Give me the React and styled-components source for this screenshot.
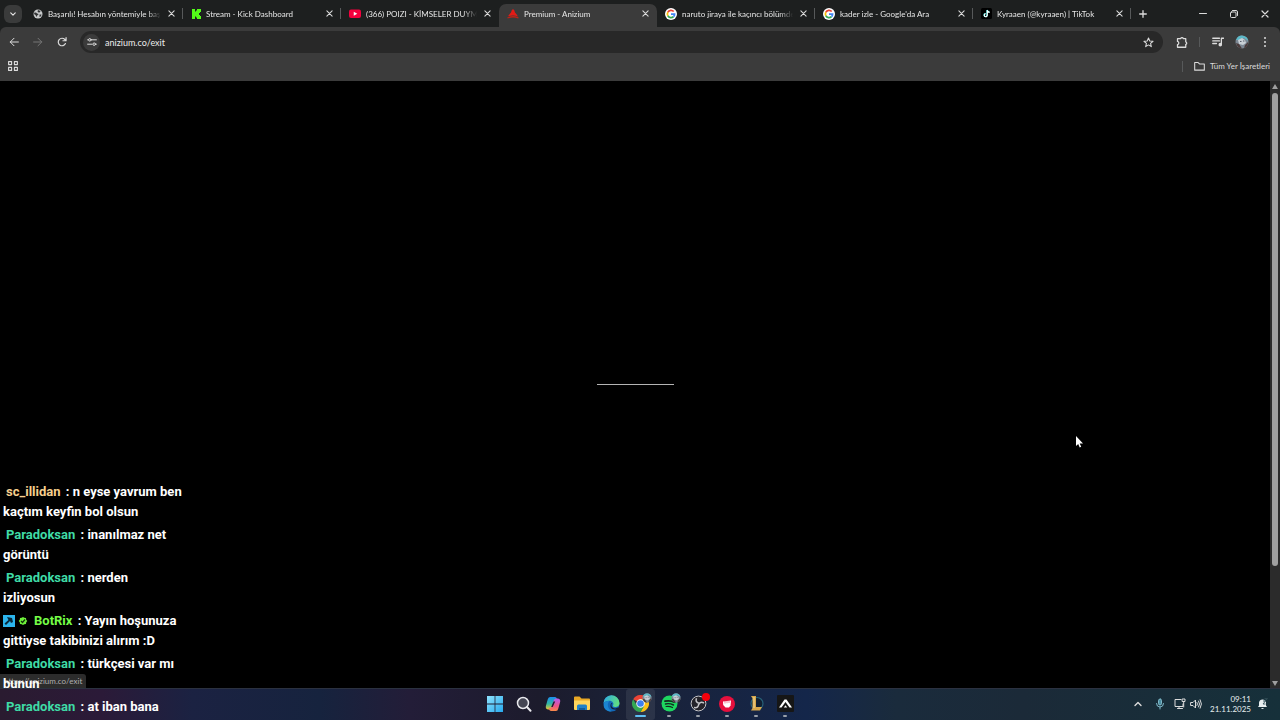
import React from 'react'
import styled, { createGlobalStyle } from 'styled-components'

const GlobalStyle = createGlobalStyle`
  * {
    box-sizing: border-box;
  }
  body {
    margin: 0;
    background: #000;
    font-family: Lato, 'Open Sans', sans-serif;
    overflow: hidden;
  }
  button, input {
    font-family: inherit;
    border: 0;
    padding: 0;
    background: none;
    color: inherit;
    outline: none;
  }
  svg {
    display: block;
    flex: none;
  }
`

const Desktop = styled.div`
  position: relative;
  display: flex;
  flex-direction: column;
  height: 100vh;
`

const TabStrip = styled.header`
  display: flex;
  align-items: stretch;
  height: 27px;
  background: #1d1f1f;
  color: #e6e6e6;
`

const TabSearch = styled.button`
  display: flex;
  align-items: center;
  justify-content: center;
  align-self: center;
  width: 18px;
  height: 18px;
  margin: 0 3px 0 4px;
  border-radius: 6px;
  background: #3a3b3b;
`

const TabItem = styled.div`
  flex: 0 1 158px;
  min-width: 0;
  display: flex;
  align-items: center;
  gap: 5px;
  margin-top: ${(p) => (p.$active ? '4px' : '0')};
  padding: ${(p) => (p.$active ? '0 7px 4px 8px' : '0 7px 0 8px')};
  border-radius: 7px 7px 0 0;
  background: ${(p) => (p.$active ? '#3b3b3b' : 'transparent')};
`

const TabLabel = styled.button`
  flex: 1;
  min-width: 0;
  height: 18px;
  line-height: 18px;
  text-align: left;
  font-size: 8px;
  white-space: nowrap;
  overflow: hidden;
  mask-image: linear-gradient(to right, #000 88%, transparent);
`

const Divider = styled.span`
  flex: none;
  align-self: center;
  width: 1px;
  height: ${(p) => p.$height || 11}px;
  margin: ${(p) => p.$margin || '0'};
  background: ${(p) => (p.$hidden ? 'transparent' : '#57595a')};
`

const IconButton = styled.button`
  flex: none;
  align-self: center;
  display: flex;
  align-items: center;
  justify-content: center;
  width: ${(p) => p.$width || 12}px;
  height: 18px;
  color: ${(p) => p.$color || '#dcdcdc'};
`

const WindowControls = styled.div`
  display: flex;
  align-items: center;
  margin-left: auto;
`

const ToolbarBack = styled.div`
  background: #1d1f1f;
`

const Toolbar = styled.nav`
  display: flex;
  align-items: center;
  height: 30px;
  padding: 0 4px 0 2px;
  background: #3b3b3b;
  border-radius: 6px 6px 0 0;
`

const Omnibox = styled.form`
  flex: 1;
  display: flex;
  align-items: center;
  gap: 5px;
  height: 22px;
  margin: 0 8px 0 6px;
  padding: 0 9px 0 3px;
  border-radius: 11px;
  background: #282828;
`

const SiteInfo = styled.button`
  display: flex;
  align-items: center;
  justify-content: center;
  width: 17px;
  height: 17px;
  border-radius: 50%;
  background: #3b3b3b;
  color: #dcdcdc;
`

const Address = styled.input`
  flex: 1;
  min-width: 0;
  height: 20px;
  font-size: 9px;
  color: #ececec;
`

const Bookmarks = styled.div`
  display: flex;
  align-items: center;
  height: 24px;
  padding: 0 10px 6px 7px;
  background: #3b3b3b;
  color: #dcdcdc;
`

const FolderButton = styled.button`
  display: flex;
  align-items: center;
  gap: 5px;
  font-size: 8px;
  white-space: nowrap;
`

const Page = styled.main`
  position: relative;
  flex: 1;
  min-height: 0;
  display: flex;
  background: #000;
`

const Content = styled.div`
  flex: 1;
  display: flex;
  align-items: center;
  justify-content: center;
`

const Loader = styled.div`
  width: 77px;
  height: 1px;
  background: #b4b4b4;
`

const Scrollbar = styled.div`
  display: flex;
  flex-direction: column;
  align-items: center;
  width: 10px;
  padding: 3px 0 2px;
  background: #2b2b2b;
`

const Arrow = styled.span`
  border: 3px solid transparent;
  border-top-width: ${(p) => (p.$down ? '5px' : '0')};
  border-bottom-width: ${(p) => (p.$down ? '0' : '5px')};
  border-${(p) => (p.$down ? 'top' : 'bottom')}-color: #9f9f9f;
`

const Track = styled.div`
  flex: 1;
  width: 6px;
  margin: 4px 0;
`

const Thumb = styled.div`
  height: 81%;
  border-radius: 3px;
  background: #9f9f9f;
`

const StatusBubble = styled.div`
  position: absolute;
  left: 0;
  bottom: 0;
  height: 14px;
  padding: 0 4px;
  border-radius: 0 3px 0 0;
  background: #2c2c2c;
  color: #b0b0b0;
  font-size: 8px;
  line-height: 14px;
`

const Pointer = styled.svg`
  position: absolute;
  left: 84%;
  top: 354px;
`

const Chat = styled.ul`
  position: absolute;
  left: 3px;
  bottom: 3px;
  display: flex;
  flex-direction: column;
  gap: 3px;
  margin: 0;
  padding: 0;
  list-style: none;
  font-family: Roboto, sans-serif;
  font-size: 13px;
  font-weight: 700;
  line-height: 20px;
  color: #fff;
`

const Message = styled.li`
  white-space: pre-line;
`

const Nick = styled.span`
  margin: 0 2px 0 3px;
  color: ${(p) => p.$color};
`

const Badge = styled.span`
  display: inline-block;
  height: 12px;
  margin-right: 3px;
  vertical-align: -2px;
  line-height: 12px;
`

const Taskbar = styled.footer`
  display: grid;
  grid-template-columns: 1fr auto 1fr;
  align-items: stretch;
  height: 32px;
  border-top: 1px solid #2b3140;
  background: linear-gradient(
    to right,
    #2a1b30 0%,
    #2b1a38 8%,
    #1b2242 15%,
    #16233e 25%,
    #231d38 32%,
    #1c1b2c 42%,
    #1a2238 50%,
    #14264a 63%,
    #1a2b3c 70%,
    #1b2a38 80%,
    #16303a 100%
  );
`

const Apps = styled.div`
  grid-column: 2;
  display: flex;
`

const AppButton = styled.button`
  position: relative;
  display: flex;
  align-items: center;
  justify-content: center;
  width: 29px;
  padding-bottom: 2px;
  border-radius: 3px;
  background: ${(p) => (p.$active ? 'rgba(255, 255, 255, 0.08)' : 'transparent')};

  &::after {
    content: '';
    position: absolute;
    bottom: 3px;
    width: ${(p) => (p.$active ? '11px' : '4px')};
    height: 2px;
    border-radius: 1px;
    background: ${(p) => (p.$active ? '#5fc0f5' : '#9aa0aa')};
    display: ${(p) => (p.$running ? 'block' : 'none')};
  }
`

const AppBadge = styled.span`
  position: absolute;
  top: 4px;
  right: 3px;
`

const Tray = styled.div`
  display: flex;
  align-items: center;
  justify-content: flex-end;
  padding: 0 12px 2px 0;
  color: #e8eef0;
`

const Clock = styled.time`
  width: 42px;
  margin: 0 5px 0 6px;
  text-align: right;
  font-size: 8px;
  line-height: 10px;
  white-space: nowrap;
`

const Stroke = ({ w, h = w, box = '0 0 16 16', sw = 1.6, children }) => (
  <svg width={w} height={h} viewBox={box} fill="none" stroke="currentColor" strokeWidth={sw} strokeLinecap="round" strokeLinejoin="round">
    {children}
  </svg>
)

const Close = ({ size = 7 }) => (
  <Stroke w={size} box="0 0 8 8" sw={1.2}>
    <path d="M1 1l6 6M7 1L1 7" />
  </Stroke>
)

const Globe = () => (
  <svg width="10" height="10" viewBox="0 0 20 20">
    <circle cx="10" cy="10" r="9" fill="#c8cacb" />
    <path d="M3 7q4-1 5 2 3 0 3 2-3 1-3 3l-1 2-2-4-3-2zM10 2l5 2q-1 4-4 3l-2-2zM13 11h4q0 4-4 5z" fill="#333536" />
  </svg>
)

const Kick = () => (
  <svg width="10" height="10" viewBox="0 0 10 10">
    <path d="M1 0h3v2.500h1V1.500h1V0h4v3H9v1H8v2h1v1h1v3H6V8.500H5v-1H4V10H1z" fill="#53fc18" />
  </svg>
)

const YouTube = () => (
  <svg width="12" height="10" viewBox="0 0 24 18">
    <rect width="24" height="17" rx="4" fill="#f4003d" />
    <path d="M9.500 4.500v8l7-4z" fill="#fff" />
  </svg>
)

const Anizium = () => (
  <svg width="12" height="10" viewBox="0 0 24 20">
    <path d="M12 0q3 1 4 7 3 3 6 8-10-4-20 0 3-5 6-8 1-6 4-7z" fill="#e31b16" />
    <path d="M1 18q11-5 22 0" fill="none" stroke="#c02318" strokeWidth="2.500" />
  </svg>
)

const Google = () => (
  <svg width="12" height="12" viewBox="0 0 24 24">
    <circle cx="12" cy="12" r="12" fill="#fff" />
    <g fill="none" strokeWidth="3.400">
      <path d="M17.500 7A7.200 7.200 0 0 0 5.700 8.500" stroke="#ea4335" />
      <path d="M5.700 8.500a7.200 7.200 0 0 0 0 7" stroke="#fbbc05" />
      <path d="M5.700 15.500a7.200 7.200 0 0 0 11.300 1.800" stroke="#34a853" />
      <path d="M17 17.300a7 7 0 0 0 2.200-5H12" stroke="#4285f4" />
    </g>
  </svg>
)

const TikTok = () => (
  <svg width="11" height="11" viewBox="0 0 22 22">
    <rect width="22" height="22" rx="3" fill="#000" />
    <path d="M12 4v10a3 3 0 1 1-3-3M12 4q1 4 5 4" fill="none" stroke="#27f4ee" strokeWidth="2.500" />
    <path d="M12.500 4.500v10a3 3 0 1 1-3-3M12.500 4.500q1 4 5 4" fill="none" stroke="#fff" strokeWidth="2.400" />
  </svg>
)

const Avatar = ({ size = 14 }) => (
  <svg width={size} height={size} viewBox="0 0 14 14">
    <circle cx="7" cy="7" r="6.500" fill="#7c8894" />
    <path d="M1 5Q3 0 8 .700q5 1 5 5L9 3 5 5z" fill="#5cb9c8" />
    <path d="M3 5l4-2 3 2 1 3-3 2-4-1z" fill="#c9d0d6" />
    <path d="M1 8l3 1 3 4.500q-5-.500-6-5.500zM10 10l3-3q.500 5-4 6z" fill="#4b3a3a" />
    <path d="M5 6.500h1.500M8 6h1.500" stroke="#59606e" />
  </svg>
)

const Windows = () => (
  <svg width="16" height="16" viewBox="0 0 16 16">
    <defs>
      <linearGradient id="win" x1="0" y1="0" x2="1" y2="1">
        <stop offset="0" stopColor="#8fe3fd" />
        <stop offset="1" stopColor="#27a9ee" />
      </linearGradient>
    </defs>
    <path d="M0 0h7.600v7.600H0zM8.400 0H16v7.600H8.400zM0 8.400h7.600V16H0zM8.400 8.400H16V16H8.400z" fill="url(#win)" />
  </svg>
)

const Search = () => (
  <svg width="16" height="16" viewBox="0 0 16 16" fill="none" stroke="#e9e9ee">
    <circle cx="7" cy="7" r="5.500" fill="#454654" strokeWidth="1.500" />
    <path d="M11 11l3.500 3.800" strokeWidth="2" strokeLinecap="round" />
  </svg>
)

const Copilot = () => (
  <svg width="16" height="16" viewBox="0 0 16 16">
    <defs>
      <linearGradient id="copA" x1="0" y1="0" x2="0" y2="1">
        <stop offset="0" stopColor="#1c8df0" />
        <stop offset=".55" stopColor="#31b8a2" />
        <stop offset="1" stopColor="#f3c52c" />
      </linearGradient>
      <linearGradient id="copB" x1="0" y1="0" x2="0" y2="1">
        <stop offset="0" stopColor="#b35df1" />
        <stop offset=".6" stopColor="#ee5387" />
        <stop offset="1" stopColor="#f98b47" />
      </linearGradient>
    </defs>
    <path d="M5 1h5q1.500 0 2 2l.500 1.500H10L7 12q-.500 1.500-2 1.500H3Q0 13 1 9.500l1.700-6Q3.300 1 5 1z" fill="url(#copA)" />
    <path d="M11 15H6q-1.500 0-2-2l-.300-1H6L9 4q.500-1.500 2-1.500h2q3 .500 2 4l-1.700 6Q12.700 15 11 15z" fill="url(#copB)" />
    <path d="M8.500 5.500h1.700L7.700 11H6.200z" fill="#1c1e30" />
  </svg>
)

const Explorer = () => (
  <svg width="16" height="15" viewBox="0 0 16 15">
    <path d="M0 1.500Q0 .500 1 .500h4.500l2 2H15q1 0 1 1V13H0z" fill="#e9a825" />
    <path d="M0 4.500h16V13q0 1-1 1H1q-1 0-1-1z" fill="#ffd65c" />
    <path d="M3 10q0-1.500 1.500-1.500h7Q13 8.500 13 10v4H3z" fill="#2082c8" />
    <path d="M5 12h6v2H5z" fill="#115d9c" />
  </svg>
)

const Edge = () => (
  <svg width="17" height="17" viewBox="0 0 17 17">
    <defs>
      <linearGradient id="edge" x1="0" y1="0" x2="1" y2=".3">
        <stop offset="0" stopColor="#2ba8e8" />
        <stop offset="1" stopColor="#5fdc83" />
      </linearGradient>
    </defs>
    <circle cx="8.500" cy="8.500" r="8" fill="#1267b8" />
    <path d="M.500 8.500a8 8 0 0 1 16-.500c0 3-2 4-4.500 4-1.700 0-2.500-.600-2-1.400C11.500 8 9 5.800 6.500 5.800 3.500 5.800 1 7 .500 8.500z" fill="url(#edge)" />
    <path d="M6.500 6C4 8 4 13 8.500 16.500-1 16.500-.500 7 3 6.400q2-.800 3.500-.400z" fill="#1b85d2" />
    <path d="M9.500 8q-2 1.500-.500 4 2.500 2.500 6 .600l1 .400-1 2q-1 0-6-1-3-3-.500-6z" fill="#172039" />
  </svg>
)

const Chrome = () => (
  <svg width="17" height="17" viewBox="0 0 18 18">
    <path d="M9 9L1.200 4.500A9 9 0 0 1 16.800 4.500H9z" fill="#ea4335" />
    <path d="M9 9V4.500h7.800A9 9 0 0 1 9 18l3.900-6.700z" fill="#fbc116" />
    <path d="M9 9l3.900 2.300L9 18A9 9 0 0 1 1.200 4.500l4 6.700z" fill="#34a853" />
    <circle cx="9" cy="9" r="4.500" fill="#fff" />
    <circle cx="9" cy="9" r="3.500" fill="#3d7ff0" />
  </svg>
)

const Spotify = () => (
  <svg width="17" height="17" viewBox="0 0 17 17" fill="none" stroke="#142b20" strokeLinecap="round">
    <circle cx="8.500" cy="8.500" r="8" fill="#1ed760" stroke="none" />
    <path d="M4 6.200q5-1.200 9.500 1" strokeWidth="1.700" />
    <path d="M4.500 9q4-1 8 1" strokeWidth="1.400" />
    <path d="M5 11.500q3.500-.700 6.500 1" strokeWidth="1.200" />
  </svg>
)

const Obs = () => (
  <svg width="17" height="17" viewBox="0 0 17 17">
    <circle cx="8.500" cy="8.500" r="7.400" fill="#24232a" stroke="#c4c4c8" strokeWidth="1" />
    <g fill="none" stroke="#c4c4c8" strokeWidth="1.500">
      <path d="M6.500 3.200q-1.500 3.800 2.300 5" />
      <path d="M14 8q-4-1.800-5.300 1.500" />
      <path d="M4 12.500q4.500.800 4.700-3.500" />
    </g>
  </svg>
)

const Fist = () => (
  <svg width="16" height="16" viewBox="0 0 16 16">
    <circle cx="8" cy="8" r="8" fill="#e6103d" />
    <path d="M4 5.500l8-1-.400 5-1.600 2H6.500L4.200 9z" fill="#fff" />
    <path d="M6 5v2.500M8 4.700v2.500M10 4.500V7" stroke="#e6103d" strokeWidth=".5" />
  </svg>
)

const League = () => (
  <svg width="16" height="17" viewBox="0 0 16 17">
    <circle cx="9" cy="8.500" r="6" fill="#101f31" stroke="#276078" strokeWidth="1.200" />
    <path d="M3 1h5v11h6l-2 3.500H3L4.500 13V3.500z" fill="#d6a84c" />
    <path d="M6 2v11" stroke="#f2d896" />
  </svg>
)

const Peak = () => (
  <svg width="17" height="17" viewBox="0 0 17 17">
    <rect width="17" height="17" rx="1" fill="#161616" />
    <path d="M2 12.500l5.500-8h2l5.500 8h-2.500L8.500 7l-4 5.500z" fill="#fff" />
    <path d="M6.800 12.500l1.700-2.300 1.700 2.300z" fill="#fff" />
  </svg>
)

const tabs = [
  { title: 'Başarılı! Hesabın yöntemiyle başarıyla', icon: <Globe />, divider: true },
  { title: 'Stream - Kick Dashboard', icon: <Kick />, divider: true },
  { title: '(366) POIZI - KİMSELER DUYMASIN', icon: <YouTube /> },
  { title: 'Premium - Anizium', icon: <Anizium />, active: true },
  { title: 'naruto jiraya ile kaçıncı bölümde', icon: <Google />, divider: true },
  { title: "kader izle - Google'da Ara", icon: <Google />, divider: true },
  { title: 'Kyraaen (@kyraaen) | TikTok', icon: <TikTok />, divider: true },
]

const messages = [
  { nick: 'sc_illidan', color: '#f5cf8e', text: 'n eyse yavrum ben\nkaçtım keyfin bol olsun' },
  { nick: 'Paradoksan', color: '#3fdba6', text: 'inanılmaz net\ngörüntü' },
  { nick: 'Paradoksan', color: '#3fdba6', text: 'nerden\nizliyosun' },
  { nick: 'BotRix', color: '#75fd46', text: 'Yayın hoşunuza\ngittiyse takibinizi alırım :D', bot: true },
  { nick: 'Paradoksan', color: '#3fdba6', text: 'türkçesi var mı\nbunun' },
  { nick: 'Paradoksan', color: '#3fdba6', text: 'at iban bana' },
]

const RedDot = () => (
  <svg width="8" height="8" viewBox="0 0 8 8">
    <circle cx="4" cy="4" r="4" fill="#f5000c" />
  </svg>
)

const apps = [
  { name: 'Başlat', icon: <Windows /> },
  { name: 'Ara', icon: <Search /> },
  { name: 'Copilot', icon: <Copilot /> },
  { name: 'Dosya Gezgini', icon: <Explorer /> },
  { name: 'Edge', icon: <Edge /> },
  { name: 'Chrome', icon: <Chrome />, running: true, active: true, badge: <Avatar size={10} /> },
  { name: 'Spotify', icon: <Spotify />, running: true, badge: <Avatar size={10} /> },
  { name: 'OBS', icon: <Obs />, running: true, badge: <RedDot /> },
  { name: 'Riot', icon: <Fist />, running: true },
  { name: 'League of Legends', icon: <League />, running: true },
  { name: 'Peak', icon: <Peak />, running: true },
]

const Tab = ({ tab }) => (
  <>
    <TabItem $active={tab.active}>
      {tab.icon}
      <TabLabel>{tab.title}</TabLabel>
      <IconButton aria-label="Kapat" $width={10}>
        <Close />
      </IconButton>
    </TabItem>
    <Divider $hidden={!tab.divider} $margin="0 0 0 -1px" />
  </>
)

const BotBadges = () => (
  <>
    <Badge>
      <svg width="12" height="12" viewBox="0 0 12 12">
        <rect width="12" height="12" fill="#2cb5ee" />
        <path d="M4 2l5 1 1 4-2 1-1-2-4 4-1.500-1.500 4-3.500z" fill="#08283a" />
      </svg>
    </Badge>
    <Badge>
      <svg width="10" height="12" viewBox="0 0 10 12">
        <path d="M5 2l1.300.800 1.700.200.200 1.700L9.300 6l-1.100 1.300L8 9l-1.700.200L5 10l-1.300-.800L2 9l-.200-1.700L.700 6l1.100-1.300L2 3l1.700-.200z" fill="#6ef03a" />
        <path d="M3 6l1.500 1.500L7 4.500" fill="none" stroke="#12330a" strokeWidth="1.200" />
      </svg>
    </Badge>
  </>
)

export default function App() {
  return (
    <>
      <GlobalStyle />
      <Desktop>
        <TabStrip>
          <TabSearch aria-label="Sekmelerde ara">
            <Stroke w={6} box="0 0 8 8" sw={1.5}>
              <path d="M1 2.500l3 3 3-3" />
            </Stroke>
          </TabSearch>
          {tabs.map((tab) => (
            <Tab key={tab.title} tab={tab} />
          ))}
          <IconButton aria-label="Yeni sekme" $width={24}>
            <Stroke w={8} box="0 0 8 8" sw={1.3}>
              <path d="M4 .700v6.600M.700 4h6.600" />
            </Stroke>
          </IconButton>
          <WindowControls>
            <IconButton aria-label="Simge durumuna küçült" $width={30}>
              <Stroke w={8} box="0 0 8 8" sw={1}>
                <path d="M.500 3.500h7" />
              </Stroke>
            </IconButton>
            <IconButton aria-label="Önceki boyut" $width={31}>
              <Stroke w={8} box="0 0 8 8" sw={1}>
                <rect x=".500" y="2" width="5.500" height="5.500" rx="1" />
                <path d="M2.500.500h3.500q1.500 0 1.500 1.500v3.500" />
              </Stroke>
            </IconButton>
            <IconButton aria-label="Pencereyi kapat" $width={31}>
              <Close size={8} />
            </IconButton>
          </WindowControls>
        </TabStrip>

        <ToolbarBack>
          <Toolbar>
            <IconButton aria-label="Geri" $width={24}>
              <Stroke w={10}>
                <path d="M15 8H2M8 2L2 8l6 6" />
              </Stroke>
            </IconButton>
            <IconButton aria-label="İleri" $width={24} $color="#777">
              <Stroke w={10}>
                <path d="M1 8h13M8 2l6 6-6 6" />
              </Stroke>
            </IconButton>
            <IconButton aria-label="Yenile" $width={24}>
              <Stroke w={10} sw={1.9}>
                <path d="M13.500 10.500A6 6 0 1 1 12.500 4L14 5.500M14.500 1v5h-5" />
              </Stroke>
            </IconButton>
            <Omnibox>
              <SiteInfo type="button" aria-label="Site bilgileri">
                <Stroke w={10} sw={1.6}>
                  <path d="M1 4.500h1M7 4.500h8M1 11.500h7M14 11.500h1" />
                  <circle cx="4.500" cy="4.500" r="2" />
                  <circle cx="11.500" cy="11.500" r="2" />
                </Stroke>
              </SiteInfo>
              <Address aria-label="Adres" defaultValue="anizium.co/exit" />
              <IconButton type="button" aria-label="Yer işareti ekle">
                <Stroke w={11} sw={1.5}>
                  <path d="M8 1.500l1.900 4.300 4.700.400-3.600 3.100 1.100 4.700L8 11.500 3.900 14 5 9.300 1.400 6.200l4.700-.400z" />
                </Stroke>
              </IconButton>
            </Omnibox>
            <IconButton aria-label="Uzantılar" $width={22}>
              <Stroke w={12} sw={1.7}>
                <path d="M2 3.500h4.200a1.900 1.900 0 0 1 3.600 0H13v4.200a1.900 1.900 0 0 1 0 3.600V15H2v-3.500a2.200 2.200 0 0 0 0-4.300z" />
              </Stroke>
            </IconButton>
            <Divider $height={10} $margin="0 6px" />
            <IconButton aria-label="Medya" $width={24}>
              <Stroke w={12} sw={1.7}>
                <path d="M1 3h9M1 6.500h9M1 10h5M12.500 11.500V3h3" />
                <circle cx="11" cy="11.500" r="1.500" fill="currentColor" />
              </Stroke>
            </IconButton>
            <IconButton aria-label="Profil" $width={24}>
              <Avatar />
            </IconButton>
            <IconButton aria-label="Menü" $width={22}>
              <svg width="4" height="12" viewBox="0 0 4 12" fill="currentColor">
                <circle cx="2" cy="2" r="1" />
                <circle cx="2" cy="6" r="1" />
                <circle cx="2" cy="10" r="1" />
              </svg>
            </IconButton>
          </Toolbar>
        </ToolbarBack>

        <Bookmarks>
          <IconButton aria-label="Uygulamalar">
            <Stroke w={10} box="0 0 10 10" sw={1.1}>
              <path d="M.600.600h3v3h-3zM6.400.600h3v3h-3zM.600 6.400h3v3h-3zM6.400 6.400h3v3h-3z" />
            </Stroke>
          </IconButton>
          <Divider $margin="0 11px 0 auto" />
          <FolderButton>
            <Stroke w={11} h={10} box="0 0 16 14" sw={1.5}>
              <path d="M1 2h5l2 2h7v9H1z" />
            </Stroke>
            Tüm Yer İşaretleri
          </FolderButton>
        </Bookmarks>

        <Page>
          <Content>
            <Loader />
          </Content>
          <Scrollbar>
            <Arrow />
            <Track>
              <Thumb />
            </Track>
            <Arrow $down />
          </Scrollbar>
          <StatusBubble>https://anizium.co/exit</StatusBubble>
          <Pointer width="8" height="13" viewBox="0 0 8 13">
            <path d="M1 1v10l2.200-2 1.500 3.500 1.500-.700L4.700 8.500H8z" fill="#fff" />
          </Pointer>
        </Page>

        <Taskbar>
          <Apps>
            {apps.map((app) => (
              <AppButton key={app.name} aria-label={app.name} $running={app.running} $active={app.active}>
                {app.icon}
                {app.badge && <AppBadge>{app.badge}</AppBadge>}
              </AppButton>
            ))}
          </Apps>
          <Tray>
            <IconButton aria-label="Gizli simgeler" $width={22}>
              <Stroke w={8} box="0 0 8 8" sw={1.4}>
                <path d="M1 5.500l3-3 3 3" />
              </Stroke>
            </IconButton>
            <IconButton aria-label="Mikrofon" $width={22} $color="#7fb9c9">
              <Stroke w={10} h={12} box="0 0 10 12" sw={1}>
                <rect x="3.500" y="1" width="3" height="6" rx="1.500" fill="#4d8fa3" />
                <path d="M1.500 5.500a3.500 3.500 0 0 0 7 0M5 9v2" />
              </Stroke>
            </IconButton>
            <IconButton aria-label="Ağ" $width={18}>
              <Stroke w={12} box="0 0 12 12" sw={1}>
                <path d="M7 1.500H1v7h8V6M3.500 10.500h5M5 8.500v2" />
                <path d="M8.500 1h2.500v2.500H8.500zM9.700 3.500V9" />
              </Stroke>
            </IconButton>
            <IconButton aria-label="Ses" $width={14}>
              <Stroke w={12} box="0 0 12 12" sw={1}>
                <path d="M1 4.500h2L5.500 2v8L3 7.500H1zM7 4.500q1 1.500 0 3M8.600 3q2 3 0 6M10.200 1.800q2.600 4.200 0 8.400" />
              </Stroke>
            </IconButton>
            <Clock>
              09:11
              <br />
              21.11.2025
            </Clock>
            <IconButton aria-label="Bildirimler">
              <svg width="11" height="12" viewBox="0 0 11 12">
                <path d="M1 9l1-1.500V4.500Q2.500 1.500 5.500 1.500T9 4.500v3L10 9zM4 10h3q-1.500 2-3 0z" fill="#e8eef0" />
                <path d="M6 3h2.500L6 6h2.500M7.500.700h3L7.500 3" fill="none" stroke="#34505a" strokeWidth=".9" />
              </svg>
            </IconButton>
          </Tray>
        </Taskbar>

        <Chat>
          {messages.map((m) => (
            <Message key={m.nick + m.text}>
              {m.bot && <BotBadges />}
              <Nick $color={m.color}>{m.nick}</Nick>
              {' : ' + m.text}
            </Message>
          ))}
        </Chat>
      </Desktop>
    </>
  )
}
